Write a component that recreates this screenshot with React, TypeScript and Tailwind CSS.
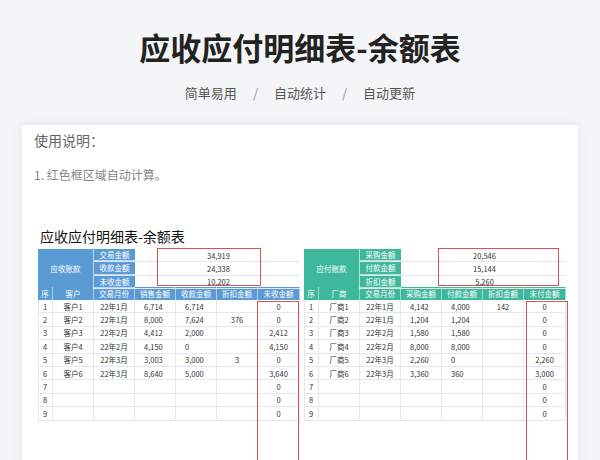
import React from "react";

const cols = "grid grid-cols-[15px_41px_41px_41px_41px_41px_42px]";

type Side = {
  color: string; label: string; labels: string[]; values: string[];
  heads: string[]; rows: string[][]; box1: string; box2: string;
};

const left: Side = {
  color: "bg-[#5b9bd5]", label: "应收账款", labels: ["交易金额", "收款金额", "未收金额"],
  values: ["34,919", "24,338", "10,202"],
  heads: ["序", "客户", "交易月份", "销售金额", "收款金额", "折扣金额", "未收金额"],
  rows: [
    ["1", "客户1", "22年1月", "6,714", "6,714", "", "0"],
    ["2", "客户2", "22年1月", "8,000", "7,624", "376", "0"],
    ["3", "客户3", "22年2月", "4,412", "2,000", "", "2,412"],
    ["4", "客户4", "22年2月", "4,150", "0", "", "4,150"],
    ["5", "客户5", "22年3月", "3,003", "3,000", "3", "0"],
    ["6", "客户6", "22年3月", "8,640", "5,000", "", "3,640"],
    ["7", "", "", "", "", "", "0"],
    ["8", "", "", "", "", "", "0"],
    ["9", "", "", "", "", "", "0"],
  ],
  box1: "left-[119px] w-[104px]", box2: "left-[219px]",
};
const right: Side = {
  color: "bg-[#3db89c]", label: "应付账款", labels: ["采购金额", "付款金额", "折扣金额"],
  values: ["20,546", "15,144", "5,260"],
  heads: ["序", "厂商", "交易月份", "采购金额", "付款金额", "折扣金额", "未付金额"],
  rows: [
    ["1", "厂商1", "22年1月", "4,142", "4,000", "142", "0"],
    ["2", "厂商2", "22年1月", "1,204", "1,204", "", "0"],
    ["3", "厂商3", "22年2月", "1,580", "1,580", "", "0"],
    ["4", "厂商4", "22年2月", "8,000", "8,000", "", "0"],
    ["5", "厂商5", "22年3月", "2,260", "0", "", "2,260"],
    ["6", "厂商6", "22年3月", "3,360", "360", "", "3,000"],
    ["7", "", "", "", "", "", "0"],
    ["8", "", "", "", "", "", "0"],
    ["9", "", "", "", "", "", "0"],
  ],
  box1: "left-[134px] w-[121px]", box2: "left-[222px]",
};

function Table({ s }: { s: Side }) {
  return (
    <div className="relative w-[262px] text-[7.5px] text-[#333]">
      <div className={`${cols} h-[38px]`}>
        <div className={`col-span-2 ${s.color} text-white flex items-center justify-center border-r border-white/60`}>{s.label}</div>
        <div className="col-span-5 grid grid-rows-3">
          {s.labels.map((l, i) => (
            <div key={i} className="grid grid-cols-[41px_123px_42px] border-b border-[#e3e8ee]">
              <div className={`${s.color} text-white flex items-center justify-center border-b border-white/60`}>{l}</div>
              <div className="flex items-center justify-center pl-[44px]">{s.values[i]}</div>
              <div />
            </div>
          ))}
        </div>
      </div>
      <div className={`${cols} h-[13px] ${s.color} text-white`}>
        {s.heads.map((h, i) => (
          <div key={i} className="flex items-center justify-center border-r border-white/50">{h}</div>
        ))}
      </div>
      {s.rows.map((r, ri) => (
        <div key={ri} className={`${cols} h-[13.4px] border-b border-[#e3e8ee]`}>
          {r.map((c, ci) => (
            <div key={ci} className={`flex items-center border-r border-[#e3e8ee] ${ci === 0 ? "justify-start pl-[4px] border-l" : ci >= 3 && ci <= 4 ? "justify-start pl-[9px]" : "justify-center"}`}>{c}</div>
          ))}
        </div>
      ))}
      <div className={`absolute top-[-1px] h-[38px] border border-[#d9534f] ${s.box1}`} />
      <div className={`absolute top-[52px] h-[170px] w-[42px] border border-[#d9534f] ${s.box2}`} />
    </div>
  );
}

export default function App() {
  return (
    <div className="w-[600px] h-[460px] overflow-hidden bg-[#f4f5f7]" style={{ fontFamily: '"Noto Sans CJK SC", "Noto Sans", sans-serif' }}>
      <h1 className="text-center text-[31px] font-bold text-[#222] pt-[25px] leading-[44px]">应收应付明细表-余额表</h1>
      <div className="flex justify-center gap-[16px] text-[13px] text-[#555] mt-[14px] leading-[20px]">
        <span>简单易用</span><span className="text-[#999]">/</span><span>自动统计</span><span className="text-[#999]">/</span><span>自动更新</span>
      </div>
      <div className="mx-[22px] mt-[22px] h-[400px] bg-white shadow-[0_0_10px_rgba(0,0,0,0.08)] px-[12px] pt-[5px]">
        <div className="text-[14px] text-[#666] leading-[20px]">使用说明：</div>
        <div className="text-[12px] text-[#888] mt-[16px] leading-[18px]">1. 红色框区域自动计算。</div>
        <div className="text-[14px] text-[#111] mt-[43px] ml-[6px] leading-[18px]">应收应付明细表-余额表</div>
        <div className="flex gap-[4px] ml-[4px] mt-[4px]">
          <Table s={left} />
          <Table s={right} />
        </div>
      </div>
    </div>
  );
}
